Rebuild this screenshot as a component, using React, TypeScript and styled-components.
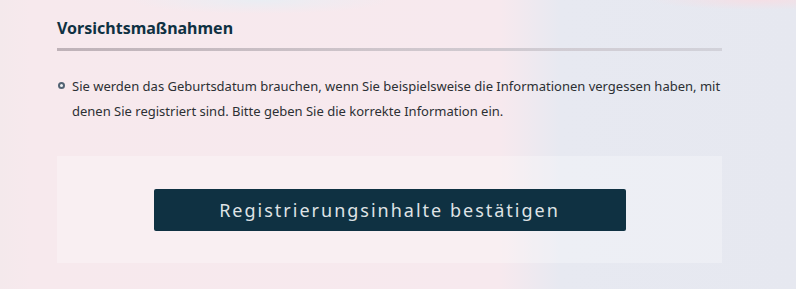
import React from 'react';
import styled, { createGlobalStyle } from 'styled-components';

const GlobalStyle = createGlobalStyle`
  html, body {
    margin: 0;
    padding: 0;
  }
  body {
    font-family: "Noto Sans", "Open Sans", sans-serif;
  }
`;

const Page = styled.div`
  width: 796px;
  height: 289px;
  box-sizing: border-box;
  padding: 17px 74px 0 57px;
  background:
    radial-gradient(ellipse 130px 14px at 260px 0px, rgba(232, 238, 244, 0.9), rgba(232, 238, 244, 0)),
    radial-gradient(ellipse 110px 10px at 760px 0px, rgba(246, 222, 228, 0.9), rgba(246, 222, 228, 0)),
    linear-gradient(90deg, #f4e9ec 0px, #f7e9ed 30px, #f7e9ee 500px, #e7e9f1 560px, #e6e8f0 796px);
`;

const Heading = styled.h2`
  margin: 0;
  padding-bottom: 9px;
  font-size: 16px;
  line-height: 22px;
  font-weight: 700;
  color: #0f3142;
  border-bottom: 3px solid transparent;
  border-image: linear-gradient(90deg, #bfb2b8, #cfc6cc 50%, #d2d2da) 1;
`;

const NoteList = styled.ul`
  list-style: none;
  margin: 23px 0 0;
  padding: 0;
`;

const NoteItem = styled.li`
  position: relative;
  padding-left: 15px;
  font-size: 13px;
  line-height: 25px;
  color: #2c3034;
  &::before {
    content: "";
    position: absolute;
    left: 1px;
    top: 8px;
    width: 3px;
    height: 3px;
    border-radius: 50%;
    border: 2.5px solid #526373;
    background: #eef0f2;
  }
`;

const ActionPanel = styled.div`
  margin-top: 32px;
  height: 107px;
  background: rgba(255, 255, 255, 0.28);
  display: flex;
  align-items: center;
  justify-content: center;
`;

const ConfirmButton = styled.button`
  width: 472px;
  height: 42px;
  border: none;
  border-radius: 2px;
  background: #0f3142;
  color: #dfe3e6;
  font-family: "Noto Sans", sans-serif;
  font-size: 18px;
  letter-spacing: 2px;
  cursor: pointer;
`;

export default function App() {
  return (
    <>
      <GlobalStyle />
      <Page>
        <Heading>Vorsichtsmaßnahmen</Heading>
        <NoteList>
          <NoteItem>
            Sie werden das Geburtsdatum brauchen, wenn Sie beispielsweise die Informationen vergessen haben, mit
            denen Sie registriert sind. Bitte geben Sie die korrekte Information ein.
          </NoteItem>
        </NoteList>
        <ActionPanel>
          <ConfirmButton>Registrierungsinhalte bestätigen</ConfirmButton>
        </ActionPanel>
      </Page>
    </>
  );
}
